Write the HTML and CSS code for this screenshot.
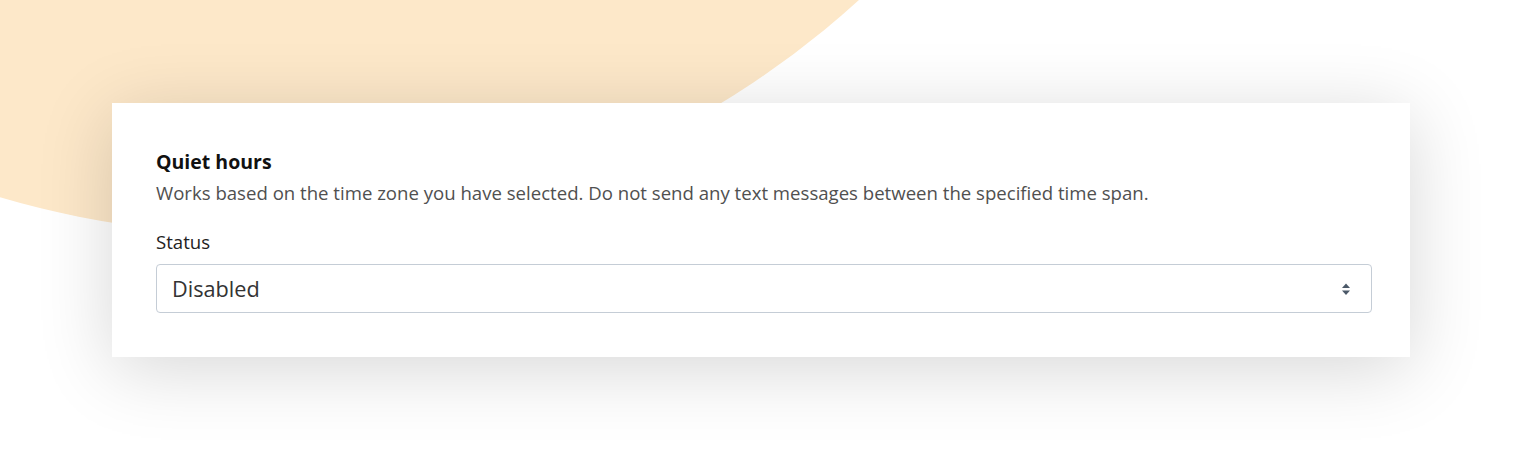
FILE: index.html
```html
<!DOCTYPE html>
<html lang="en">
<head>
    <meta charset="UTF-8">
    <title>Quiet hours</title>
    <link rel="stylesheet" href="styles.css">
</head>
<body>
    <div class="blob"></div>
    <div class="page">
        <div class="card">
            <h2>Quiet hours</h2>
            <p class="hint">Works based on the time zone you have selected. Do not send any text messages between the specified time span.</p>
            <label for="status">Status</label>
            <div class="select">
                <span id="status">Disabled</span>
                <svg class="arrows" width="10" height="16" viewBox="0 0 10 16">
                    <path d="M5 2.5 L9 7 L1 7 Z" fill="#4b5968"/>
                    <path d="M5 14 L9 9.5 L1 9.5 Z" fill="#4b5968"/>
                </svg>
            </div>
        </div>
    </div>
</body>
</html>
```

FILE: styles.css
```css
body {
    margin: 0;
    height: 460px;
    background: #fff;
    font-family: 'Open Sans', 'Noto Sans', sans-serif;
    overflow: hidden;
    position: relative;
}
.blob {
    position: absolute;
    left: -645px;
    top: -1564px;
    width: 1798px;
    height: 1798px;
    border-radius: 50%;
    background: #fde8c9;
}
.page {
    position: relative;
    padding: 103px 112px 0 112px;
}
.card {
    background: #fff;
    padding: 46px 38px 44px 44px;
    box-shadow: 0 12px 70px rgba(0, 0, 0, 0.16);
}
h2 {
    margin: 0;
    font-size: 19.5px;
    font-weight: 700;
    color: #111;
    line-height: 26px;
}
.hint {
    margin: 5px 0 0;
    font-size: 18.6px;
    color: #505050;
    line-height: 26px;
    white-space: nowrap;
}
label {
    display: block;
    margin-top: 24px;
    font-size: 18.6px;
    color: #222;
    line-height: 24px;
}
.select {
    margin-top: 10px;
    height: 47px;
    border: 1px solid #c5cdd6;
    border-radius: 4px;
    display: flex;
    align-items: center;
    justify-content: space-between;
    padding: 0 20px 0 15px;
    font-size: 21.7px;
    color: #333;
}
```
